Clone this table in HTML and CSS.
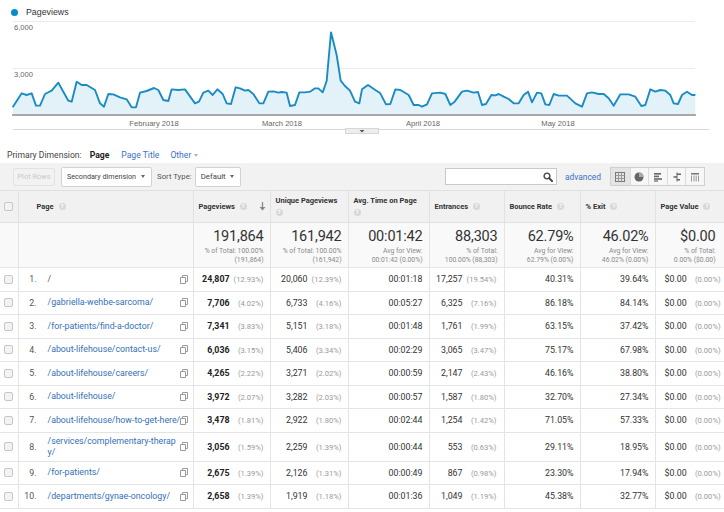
FILE: index.html
```html
<!DOCTYPE html>
<html>
<head>
<meta charset="utf-8">
<link rel="stylesheet" href="styles.css">
</head>
<body>
<div class="chart">
  <div class="legend"><span class="dot"></span><span>Pageviews</span></div>
  <svg class="plot" width="724" height="118" viewBox="0 20 724 118">
    <line class="grid" x1="13" y1="21.5" x2="695" y2="21.5"/>
    <line class="grid" x1="13" y1="68.5" x2="695" y2="68.5"/>
    <text class="ylab" x="14" y="30">6,000</text>
    <text class="ylab" x="14" y="77">3,000</text>
    <g transform="scale(0.333333)">
      <path class="area" d="M38,322 L65,280 L80,285 L95,280 L108,317 L120,317 L135,282 L155,272 L175,248 L205,302 L215,305 L230,245 L245,255 L260,255 L285,270 L300,310 L312,320 L325,282 L340,283 L360,292 L380,298 L395,322 L408,322 L420,278 L440,273 L462,264 L475,270 L490,300 L505,303 L515,268 L535,270 L555,268 L585,310 L597,305 L610,278 L625,272 L638,285 L652,268 L668,282 L680,310 L693,312 L707,262 L720,265 L735,272 L745,270 L760,282 L778,310 L790,310 L805,275 L820,274 L835,278 L845,276 L860,278 L870,318 L885,315 L898,277 L915,277 L930,275 L945,265 L955,265 L968,277 L980,243 L993,97 L1010,165 L1022,242 L1035,258 L1050,272 L1065,305 L1078,310 L1086,268 L1104,255 L1126,270 L1141,280 L1158,313 L1171,312 L1186,268 L1201,270 L1226,285 L1241,315 L1256,315 L1266,320 L1281,313 L1296,280 L1321,278 L1336,282 L1351,315 L1364,305 L1386,275 L1401,272 L1421,278 L1434,276 L1446,315 L1458,312 L1474,285 L1486,286 L1496,282 L1511,290 L1526,297 L1541,310 L1556,310 L1571,285 L1584,275 L1596,307 L1611,278 L1624,280 L1636,313 L1648,315 L1661,282 L1676,287 L1701,287 L1726,310 L1746,320 L1761,280 L1776,277 L1796,282 L1811,282 L1826,295 L1841,317 L1861,283 L1886,283 L1906,290 L1924,318 L1936,315 L1951,268 L1966,275 L1981,270 L1996,272 L2011,285 L2021,310 L2034,312 L2046,285 L2061,275 L2076,285 L2086,285 L2086,345 L38,345 Z"/>
      <path class="line" d="M38,322 L65,280 L80,285 L95,280 L108,317 L120,317 L135,282 L155,272 L175,248 L205,302 L215,305 L230,245 L245,255 L260,255 L285,270 L300,310 L312,320 L325,282 L340,283 L360,292 L380,298 L395,322 L408,322 L420,278 L440,273 L462,264 L475,270 L490,300 L505,303 L515,268 L535,270 L555,268 L585,310 L597,305 L610,278 L625,272 L638,285 L652,268 L668,282 L680,310 L693,312 L707,262 L720,265 L735,272 L745,270 L760,282 L778,310 L790,310 L805,275 L820,274 L835,278 L845,276 L860,278 L870,318 L885,315 L898,277 L915,277 L930,275 L945,265 L955,265 L968,277 L980,243 L993,97 L1010,165 L1022,242 L1035,258 L1050,272 L1065,305 L1078,310 L1086,268 L1104,255 L1126,270 L1141,280 L1158,313 L1171,312 L1186,268 L1201,270 L1226,285 L1241,315 L1256,315 L1266,320 L1281,313 L1296,280 L1321,278 L1336,282 L1351,315 L1364,305 L1386,275 L1401,272 L1421,278 L1434,276 L1446,315 L1458,312 L1474,285 L1486,286 L1496,282 L1511,290 L1526,297 L1541,310 L1556,310 L1571,285 L1584,275 L1596,307 L1611,278 L1624,280 L1636,313 L1648,315 L1661,282 L1676,287 L1701,287 L1726,310 L1746,320 L1761,280 L1776,277 L1796,282 L1811,282 L1826,295 L1841,317 L1861,283 L1886,283 L1906,290 L1924,318 L1936,315 L1951,268 L1966,275 L1981,270 L1996,272 L2011,285 L2021,310 L2034,312 L2046,285 L2061,275 L2076,285 L2086,285"/>
    </g>
    <line class="base" x1="12" y1="115" x2="696" y2="115"/>
    <text class="xlab" x="154" y="125.5" text-anchor="middle">February 2018</text>
    <text class="xlab" x="282" y="125.5" text-anchor="middle">March 2018</text>
    <text class="xlab" x="423" y="125.5" text-anchor="middle">April 2018</text>
    <text class="xlab" x="558" y="125.5" text-anchor="middle">May 2018</text>
    <line class="sep" x1="13" y1="129.5" x2="709" y2="129.5"/>
    <rect class="handle" x="345.5" y="128.5" width="33" height="5"/>
    <path d="M359.5,130 L364.5,130 L362,132.5 Z" fill="#555"/>
  </svg>
</div>

<div class="primary">
  <span class="pd-label">Primary Dimension:</span>
  <span class="pd-active">Page</span>
  <span class="pd-link">Page Title</span>
  <span class="pd-link pd-other">Other <span class="caret-s"></span></span>
</div>

<div class="toolbar">
  <div class="tb-left">
    <div class="btn disabled">Plot Rows</div>
    <div class="btn select sec">Secondary dimension <span class="caret"></span></div>
    <span class="tb-text">Sort Type:</span>
    <div class="btn select def">Default <span class="caret"></span></div>
  </div>
  <div class="tb-right">
    <div class="search">
      <svg class="mag" width="10" height="10" viewBox="0 0 10 10"><circle cx="4" cy="4" r="2.9" fill="none" stroke="#444" stroke-width="1.4"/><path d="M6.1 6.1 L9 9" stroke="#444" stroke-width="2" stroke-linecap="round"/></svg>
    </div>
    <span class="adv">advanced</span>
    <div class="views">
      <span class="view on"><svg width="10" height="10" viewBox="0 0 10 10"><rect x=".5" y=".5" width="9" height="9" fill="none" stroke="#777"/><path d="M3.5 .5V9.5M6.5 .5V9.5M.5 3.5H9.5M.5 6.5H9.5" stroke="#999" fill="none"/></svg></span>
      <span class="view"><svg width="10" height="10" viewBox="0 0 10 10"><circle cx="5" cy="5" r="4.5" fill="#666"/><path d="M5 5 L5 .5 A4.5 4.5 0 0 1 9.5 5 Z" fill="#aaa"/></svg></span>
      <span class="view"><svg width="10" height="10" viewBox="0 0 10 10"><rect x="1" y="1" width="7" height="1.6" fill="#666"/><rect x="1" y="3.6" width="5" height="1.6" fill="#666"/><rect x="1" y="6.2" width="8" height="1.6" fill="#666"/><rect x="1" y="8.4" width="4" height="1.2" fill="#666"/></svg></span>
      <span class="view"><svg width="10" height="10" viewBox="0 0 10 10"><path d="M5 .5V9.5" stroke="#666"/><rect x="5" y="1.5" width="4" height="1.5" fill="#666"/><rect x="1.5" y="4.2" width="3.5" height="1.5" fill="#666"/><rect x="5" y="7" width="3" height="1.5" fill="#666"/></svg></span>
      <span class="view"><svg width="10" height="10" viewBox="0 0 10 10"><rect x="1" y="1" width="8" height="1.5" fill="#777"/><path d="M1.5 3.5V9.5M4 3.5V9.5M6.2 3.5V9.5M8.5 3.5V9.5" stroke="#999"/></svg></span>
    </div>
  </div>
</div>

<table class="report">
  <colgroup>
    <col class="w-cb"><col class="w-page"><col class="w-pv"><col class="w-upv"><col class="w-time"><col class="w-ent"><col class="w-br"><col class="w-ex"><col class="w-val">
  </colgroup>
  <thead>
    <tr class="hdr">
      <th class="cb"><span class="chk"></span></th>
      <th class="h-page">Page <span class="help">?</span></th>
      <th><div class="h-sort"><span>Pageviews <span class="help">?</span></span><svg class="arrow" width="7" height="9" viewBox="0 0 7 9"><path d="M3.5 0V7.5" stroke="#888" stroke-width="1.3"/><path d="M.5 5 L3.5 8.5 L6.5 5 Z" fill="#888"/></svg></div></th>
      <th>Unique Pageviews<br><span class="help">?</span></th>
      <th>Avg. Time on Page<br><span class="help">?</span></th>
      <th>Entrances <span class="help">?</span></th>
      <th>Bounce Rate <span class="help">?</span></th>
      <th>% Exit <span class="help">?</span></th>
      <th>Page Value <span class="help">?</span></th>
    </tr>
  </thead>
  <tbody>
    <tr class="totals">
      <td class="cb"></td>
      <td></td>
      <td class="tot"><div class="big">191,864</div><div class="sub">% of Total: 100.00%<br>(191,864)</div></td>
      <td class="tot"><div class="big">161,942</div><div class="sub">% of Total: 100.00%<br>(161,942)</div></td>
      <td class="tot"><div class="big">00:01:42</div><div class="sub">Avg for View:<br>00:01:42 (0.00%)</div></td>
      <td class="tot"><div class="big">88,303</div><div class="sub">% of Total:<br>100.00% (88,303)</div></td>
      <td class="tot"><div class="big">62.79%</div><div class="sub">Avg for View:<br>62.79% (0.00%)</div></td>
      <td class="tot"><div class="big">46.02%</div><div class="sub">Avg for View:<br>46.02% (0.00%)</div></td>
      <td class="tot last"><div class="big">$0.00</div><div class="sub">% of Total:<br>0.00% ($0.00)</div></td>
    </tr>
    <tr class="row">
      <td class="cb"><span class="chk"></span></td>
      <td><div class="pg"><span class="num">1.</span><span class="url root">/</span><svg class="pop" width="8" height="9" viewBox="0 0 8 9"><path d="M2.5 2.5V.5H7.5V6.5H5.5M.5 2.5H5.5V8.5H.5Z" fill="none" stroke="#9a9a9a"/></svg></div></td>
      <td class="v"><div class="vw"><b>24,807</b><span class="pct">(12.93%)</span></div></td>
      <td class="v"><div class="vw"><span>20,060</span><span class="pct">(12.39%)</span></div></td>
      <td class="v">00:01:18</td>
      <td class="v ent"><div class="vw"><span>17,257</span><span class="pct">(19.54%)</span></div></td>
      <td class="v">40.31%</td>
      <td class="v">39.64%</td>
      <td class="pv"><div class="vw lft"><span>$0.00</span><span class="pct">(0.00%)</span></div></td>
    </tr>
    <tr class="row">
      <td class="cb"><span class="chk"></span></td>
      <td><div class="pg"><span class="num">2.</span><span class="url">/gabriella-wehbe-sarcoma/</span><svg class="pop" width="8" height="9" viewBox="0 0 8 9"><path d="M2.5 2.5V.5H7.5V6.5H5.5M.5 2.5H5.5V8.5H.5Z" fill="none" stroke="#9a9a9a"/></svg></div></td>
      <td class="v"><div class="vw"><b>7,706</b><span class="pct">(4.02%)</span></div></td>
      <td class="v"><div class="vw"><span>6,733</span><span class="pct">(4.16%)</span></div></td>
      <td class="v">00:05:27</td>
      <td class="v ent"><div class="vw"><span>6,325</span><span class="pct">(7.16%)</span></div></td>
      <td class="v">86.18%</td>
      <td class="v">84.14%</td>
      <td class="pv"><div class="vw lft"><span>$0.00</span><span class="pct">(0.00%)</span></div></td>
    </tr>
    <tr class="row">
      <td class="cb"><span class="chk"></span></td>
      <td><div class="pg"><span class="num">3.</span><span class="url">/for-patients/find-a-doctor/</span><svg class="pop" width="8" height="9" viewBox="0 0 8 9"><path d="M2.5 2.5V.5H7.5V6.5H5.5M.5 2.5H5.5V8.5H.5Z" fill="none" stroke="#9a9a9a"/></svg></div></td>
      <td class="v"><div class="vw"><b>7,341</b><span class="pct">(3.83%)</span></div></td>
      <td class="v"><div class="vw"><span>5,151</span><span class="pct">(3.18%)</span></div></td>
      <td class="v">00:01:48</td>
      <td class="v ent"><div class="vw"><span>1,761</span><span class="pct">(1.99%)</span></div></td>
      <td class="v">63.15%</td>
      <td class="v">37.42%</td>
      <td class="pv"><div class="vw lft"><span>$0.00</span><span class="pct">(0.00%)</span></div></td>
    </tr>
    <tr class="row">
      <td class="cb"><span class="chk"></span></td>
      <td><div class="pg"><span class="num">4.</span><span class="url">/about-lifehouse/contact-us/</span><svg class="pop" width="8" height="9" viewBox="0 0 8 9"><path d="M2.5 2.5V.5H7.5V6.5H5.5M.5 2.5H5.5V8.5H.5Z" fill="none" stroke="#9a9a9a"/></svg></div></td>
      <td class="v"><div class="vw"><b>6,036</b><span class="pct">(3.15%)</span></div></td>
      <td class="v"><div class="vw"><span>5,406</span><span class="pct">(3.34%)</span></div></td>
      <td class="v">00:02:29</td>
      <td class="v ent"><div class="vw"><span>3,065</span><span class="pct">(3.47%)</span></div></td>
      <td class="v">75.17%</td>
      <td class="v">67.98%</td>
      <td class="pv"><div class="vw lft"><span>$0.00</span><span class="pct">(0.00%)</span></div></td>
    </tr>
    <tr class="row">
      <td class="cb"><span class="chk"></span></td>
      <td><div class="pg"><span class="num">5.</span><span class="url">/about-lifehouse/careers/</span><svg class="pop" width="8" height="9" viewBox="0 0 8 9"><path d="M2.5 2.5V.5H7.5V6.5H5.5M.5 2.5H5.5V8.5H.5Z" fill="none" stroke="#9a9a9a"/></svg></div></td>
      <td class="v"><div class="vw"><b>4,265</b><span class="pct">(2.22%)</span></div></td>
      <td class="v"><div class="vw"><span>3,271</span><span class="pct">(2.02%)</span></div></td>
      <td class="v">00:00:59</td>
      <td class="v ent"><div class="vw"><span>2,147</span><span class="pct">(2.43%)</span></div></td>
      <td class="v">46.16%</td>
      <td class="v">38.80%</td>
      <td class="pv"><div class="vw lft"><span>$0.00</span><span class="pct">(0.00%)</span></div></td>
    </tr>
    <tr class="row">
      <td class="cb"><span class="chk"></span></td>
      <td><div class="pg"><span class="num">6.</span><span class="url">/about-lifehouse/</span><svg class="pop" width="8" height="9" viewBox="0 0 8 9"><path d="M2.5 2.5V.5H7.5V6.5H5.5M.5 2.5H5.5V8.5H.5Z" fill="none" stroke="#9a9a9a"/></svg></div></td>
      <td class="v"><div class="vw"><b>3,972</b><span class="pct">(2.07%)</span></div></td>
      <td class="v"><div class="vw"><span>3,282</span><span class="pct">(2.03%)</span></div></td>
      <td class="v">00:00:57</td>
      <td class="v ent"><div class="vw"><span>1,587</span><span class="pct">(1.80%)</span></div></td>
      <td class="v">32.70%</td>
      <td class="v">27.34%</td>
      <td class="pv"><div class="vw lft"><span>$0.00</span><span class="pct">(0.00%)</span></div></td>
    </tr>
    <tr class="row">
      <td class="cb"><span class="chk"></span></td>
      <td><div class="pg"><span class="num">7.</span><span class="url">/about-lifehouse/how-to-get-here/</span><svg class="pop" width="8" height="9" viewBox="0 0 8 9"><path d="M2.5 2.5V.5H7.5V6.5H5.5M.5 2.5H5.5V8.5H.5Z" fill="none" stroke="#9a9a9a"/></svg></div></td>
      <td class="v"><div class="vw"><b>3,478</b><span class="pct">(1.81%)</span></div></td>
      <td class="v"><div class="vw"><span>2,922</span><span class="pct">(1.80%)</span></div></td>
      <td class="v">00:02:44</td>
      <td class="v ent"><div class="vw"><span>1,254</span><span class="pct">(1.42%)</span></div></td>
      <td class="v">71.05%</td>
      <td class="v">57.33%</td>
      <td class="pv"><div class="vw lft"><span>$0.00</span><span class="pct">(0.00%)</span></div></td>
    </tr>
    <tr class="row tall">
      <td class="cb"><span class="chk"></span></td>
      <td><div class="pg"><span class="num">8.</span><span class="url">/services/complementary-therap<br>y/</span><svg class="pop" width="8" height="9" viewBox="0 0 8 9"><path d="M2.5 2.5V.5H7.5V6.5H5.5M.5 2.5H5.5V8.5H.5Z" fill="none" stroke="#9a9a9a"/></svg></div></td>
      <td class="v"><div class="vw"><b>3,056</b><span class="pct">(1.59%)</span></div></td>
      <td class="v"><div class="vw"><span>2,259</span><span class="pct">(1.39%)</span></div></td>
      <td class="v">00:00:44</td>
      <td class="v ent"><div class="vw"><span>553</span><span class="pct">(0.63%)</span></div></td>
      <td class="v">29.11%</td>
      <td class="v">18.95%</td>
      <td class="pv"><div class="vw lft"><span>$0.00</span><span class="pct">(0.00%)</span></div></td>
    </tr>
    <tr class="row">
      <td class="cb"><span class="chk"></span></td>
      <td><div class="pg"><span class="num">9.</span><span class="url">/for-patients/</span><svg class="pop" width="8" height="9" viewBox="0 0 8 9"><path d="M2.5 2.5V.5H7.5V6.5H5.5M.5 2.5H5.5V8.5H.5Z" fill="none" stroke="#9a9a9a"/></svg></div></td>
      <td class="v"><div class="vw"><b>2,675</b><span class="pct">(1.39%)</span></div></td>
      <td class="v"><div class="vw"><span>2,126</span><span class="pct">(1.31%)</span></div></td>
      <td class="v">00:00:49</td>
      <td class="v ent"><div class="vw"><span>867</span><span class="pct">(0.98%)</span></div></td>
      <td class="v">23.30%</td>
      <td class="v">17.94%</td>
      <td class="pv"><div class="vw lft"><span>$0.00</span><span class="pct">(0.00%)</span></div></td>
    </tr>
    <tr class="row">
      <td class="cb"><span class="chk"></span></td>
      <td><div class="pg"><span class="num">10.</span><span class="url">/departments/gynae-oncology/</span><svg class="pop" width="8" height="9" viewBox="0 0 8 9"><path d="M2.5 2.5V.5H7.5V6.5H5.5M.5 2.5H5.5V8.5H.5Z" fill="none" stroke="#9a9a9a"/></svg></div></td>
      <td class="v"><div class="vw"><b>2,658</b><span class="pct">(1.39%)</span></div></td>
      <td class="v"><div class="vw"><span>1,919</span><span class="pct">(1.18%)</span></div></td>
      <td class="v">00:01:36</td>
      <td class="v ent"><div class="vw"><span>1,049</span><span class="pct">(1.19%)</span></div></td>
      <td class="v">45.38%</td>
      <td class="v">32.77%</td>
      <td class="pv"><div class="vw lft"><span>$0.00</span><span class="pct">(0.00%)</span></div></td>
    </tr>
  </tbody>
</table>
</body>
</html>
```

FILE: styles.css
```css
* { box-sizing: border-box; margin: 0; padding: 0; }
html, body { background: #fff; }
body {
  width: 724px;
  height: 512px;
  overflow: hidden;
  font-family: Roboto, "Liberation Sans", Arial, sans-serif;
  color: #333;
}

/* chart */
.chart { height: 138px; }
.legend {
  display: flex;
  align-items: center;
  height: 20px;
  padding: 4px 0 0 10.5px;
  font-family: "Liberation Sans", Arial, sans-serif;
  font-size: 8.8px;
  color: #333;
}
.dot { width: 7px; height: 7px; border-radius: 50%; background: #058dc7; margin-right: 8.5px; }
.plot { display: block; }
.grid { stroke: #ececec; stroke-width: 1; }
.ylab, .xlab { font-family: "Liberation Sans", Arial, sans-serif; font-size: 7.6px; fill: #666; }
.area { fill: #e3f2f9; }
.line { fill: none; stroke: #1a8cc4; stroke-width: 1.9; vector-effect: non-scaling-stroke; stroke-linejoin: round; }
.base { stroke: #a9a9a9; stroke-width: 2; }
.sep { stroke: #d8d8d8; stroke-width: 1; }
.handle { fill: #ededed; stroke: #d6d6d6; stroke-width: 1; }

/* primary dimension */
.primary {
  display: flex;
  align-items: center;
  height: 25px;
  padding: 9px 0 0 7px;
  font-size: 8.6px;
}
.pd-label { color: #444; }
.pd-active { font-weight: 700; color: #222; margin-left: 8px; }
.pd-link { color: #3b73c4; margin-left: 12px; }
.pd-other { margin-left: 11px; display: inline-flex; align-items: center; }
.caret-s {
  display: inline-block;
  margin-left: 3px;
  border-left: 2.5px solid transparent;
  border-right: 2.5px solid transparent;
  border-top: 3px solid #9fb4d6;
}

/* toolbar */
.toolbar {
  display: flex;
  align-items: center;
  justify-content: space-between;
  height: 27px;
  padding: 0 19px 0 13px;
  background: #f2f2f2;
}
.tb-left, .tb-right { display: flex; align-items: center; }
.btn {
  display: flex;
  align-items: center;
  height: 20px;
  border: 1px solid #d2d2d2;
  border-radius: 2px;
  font-size: 7.8px;
  color: #444;
  background: #fff;
  white-space: nowrap;
}
.btn.disabled {
  width: 42px;
  height: 18px;
  justify-content: center;
  color: #c9c9c9;
  background: #f2f2f2;
  border-color: #e2e2e2;
  font-size: 7.4px;
}
.btn.select { padding: 0 6px 0 5px; justify-content: space-between; }
.btn.sec { width: 91px; margin-left: 6px; font-size: 7.2px; }
.btn.def { width: 46px; margin-left: 3px; }
.caret {
  display: inline-block;
  flex: none;
  border-left: 2.5px solid transparent;
  border-right: 2.5px solid transparent;
  border-top: 3.5px solid #666;
}
.tb-text { margin-left: 5px; font-size: 7.8px; color: #555; white-space: nowrap; }
.search {
  display: flex;
  align-items: center;
  justify-content: flex-end;
  width: 112px;
  height: 17px;
  background: #fff;
  border: 1px solid #c9c9c9;
  padding-right: 3px;
}
.mag { display: block; }
.adv { margin-left: 8px; font-size: 8.4px; color: #3b73c4; }
.views {
  display: grid;
  grid-template-columns: repeat(5, 1fr);
  width: 95px;
  height: 19px;
  margin-left: 9px;
  border: 1px solid #cfcfcf;
  background: #f7f7f7;
}
.view {
  display: flex;
  align-items: center;
  justify-content: center;
  border-left: 1px solid #dcdcdc;
}
.view:first-child { border-left: none; }
.view.on { background: #e4e4e4; }

/* table */
.report {
  width: 724px;
  table-layout: fixed;
  border-collapse: collapse;
  border-top: 1px solid #e0e0e0;
  font-size: 8.8px;
}
.w-cb { width: 18px; }
.w-page { width: 175px; }
.w-pv { width: 77px; }
.w-upv { width: 78px; }
.w-time { width: 81px; }
.w-ent { width: 75px; }
.w-br { width: 76px; }
.w-ex { width: 75px; }
.w-val { width: 69px; }

.hdr { height: 32px; background: #f1f1f1; }
.hdr th {
  text-align: left;
  vertical-align: middle;
  padding: 0 4px 0 5px;
  font-size: 7.5px;
  font-weight: 700;
  color: #333;
  line-height: 12px;
  border-right: 1px solid #e2e2e2;
  border-bottom: 1px solid #e2e2e2;
}
.hdr th.cb { padding: 0; }
.hdr th.h-page { padding-left: 18px; }
.h-sort { display: flex; align-items: center; justify-content: space-between; }
.arrow { display: block; }
.help {
  display: inline-block;
  width: 7px;
  height: 7px;
  border-radius: 50%;
  background: #d8d8d8;
  color: #fff;
  font-size: 5.5px;
  line-height: 7px;
  text-align: center;
  vertical-align: middle;
  margin-left: 3px;
}
th br + .help { margin-left: 0; }

.chk {
  display: block;
  width: 9px;
  height: 9px;
  margin-left: 4px;
  border: 1px solid #c6c6c6;
  border-radius: 2px;
  background: #f3f3f3;
}

td {
  border-right: 1px solid #e4e4e4;
  border-bottom: 1px solid #e4e4e4;
  vertical-align: middle;
}
td.cb { padding: 0; }

.totals { height: 45px; background: #f9f9f9; }
.tot { text-align: right; padding: 0 6px 0 0; vertical-align: top; }
.tot.last { padding-right: 8px; }
.big { font-size: 14.5px; color: #333; line-height: 17px; padding-top: 5px; letter-spacing: -0.2px; }
.sub { font-size: 6.8px; color: #8a8a8a; line-height: 9px; margin-top: 2px; }

.row { height: 23.5px; }
.row.tall { height: 29px; }
.pg { display: flex; align-items: center; padding-right: 5px; }
.num { width: 18px; text-align: right; color: #555; flex: none; }
.url {
  flex: 1;
  min-width: 0;
  margin-left: 11px;
  color: #3570b8;
  line-height: 11px;
  white-space: nowrap;
  overflow: visible;
}
.url.root { color: #555; }
.pop { flex: none; display: block; margin-left: 1px; }

.v { text-align: right; padding-right: 6px; color: #333; }
.v.ent { padding-right: 7px; }
.vw { display: flex; justify-content: flex-end; align-items: baseline; }
.vw b { font-weight: 700; color: #222; }
.pct { width: 31px; margin-left: 3px; text-align: right; font-size: 7.6px; color: #9a9a9a; }
.pv { padding-left: 9px; }
.vw.lft { justify-content: flex-start; }
```
